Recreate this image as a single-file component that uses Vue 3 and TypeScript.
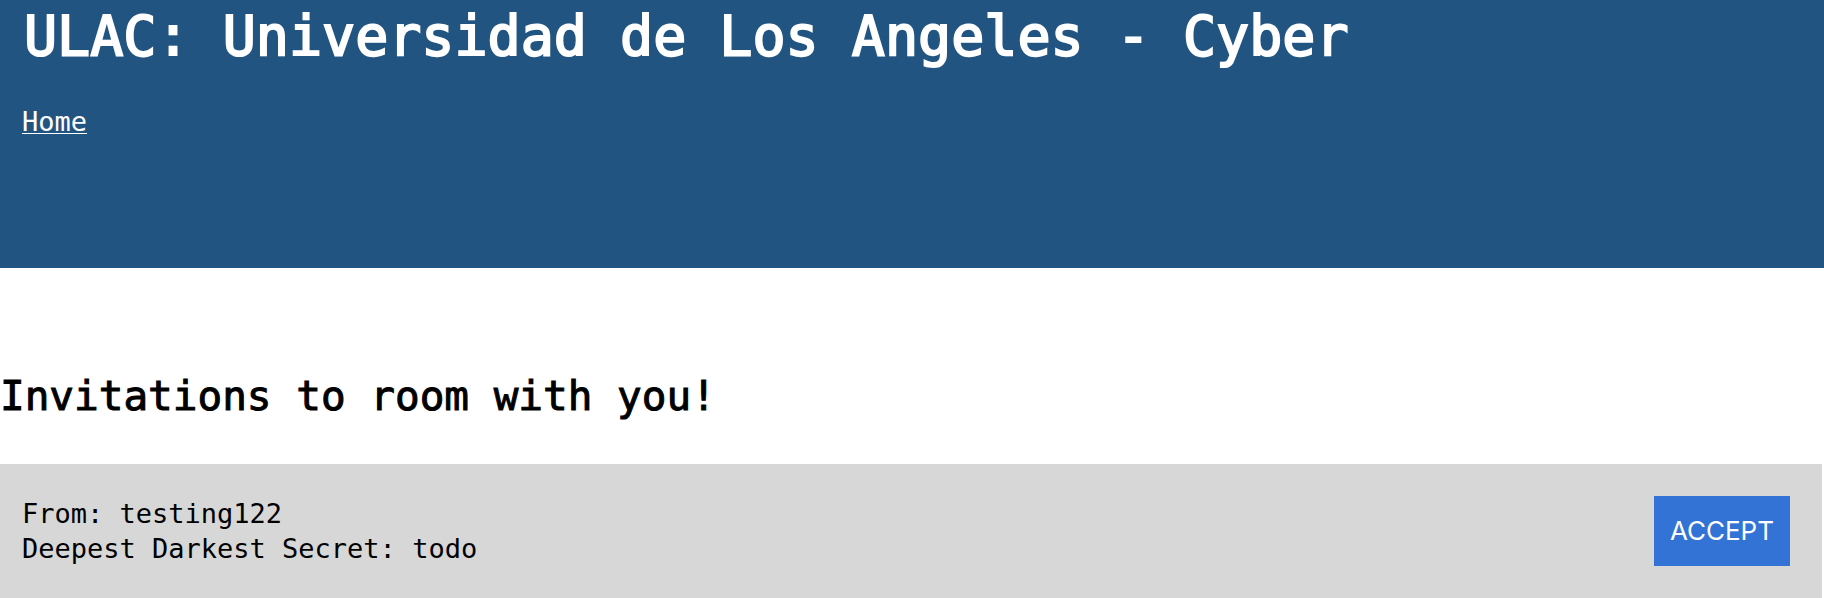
<script setup lang="ts">
interface Invitation {
  from: string
  secret: string
}

const invitations: Invitation[] = [{ from: 'testing122', secret: 'todo' }]
</script>

<template>
  <div class="page">
    <header class="banner">
      <h1>ULAC: Universidad de Los Angeles - Cyber</h1>
      <nav><a href="#">Home</a></nav>
    </header>
    <main>
      <h2>Invitations to room with you!</h2>
      <section v-for="invite in invitations" :key="invite.from" class="invite">
        <div class="details">
          <p>From: {{ invite.from }}</p>
          <p>Deepest Darkest Secret: {{ invite.secret }}</p>
        </div>
        <button type="button">ACCEPT</button>
      </section>
    </main>
  </div>
</template>

<style>
body {
  margin: 0;
  background: #ffffff;
}
</style>

<style scoped>
.page {
  font-family: "DejaVu Sans Mono", "Liberation Mono", monospace;
  font-size: 27px;
  line-height: 35px;
  color: #000000;
  overflow: hidden;
}

h1,
h2,
p {
  margin: 0;
  font-weight: 400;
}

.banner {
  padding: 0 22px 129px;
  background: #225482;
  color: #ffffff;
}

h1 {
  padding-left: 2px;
  font-size: 55px;
  line-height: 72px;
  -webkit-text-stroke: 2px currentColor;
}

nav {
  padding-top: 32px;
}

a {
  color: inherit;
  text-decoration: underline;
  text-decoration-thickness: 1px;
  text-underline-offset: 2px;
}

h2 {
  padding: 100px 0 40px;
  font-size: 41px;
  line-height: 56px;
  -webkit-text-stroke: 1px currentColor;
}

.invite {
  display: flex;
  align-items: center;
  justify-content: space-between;
  margin-right: 2px;
  padding: 32px 32px 32px 22px;
  background: #d7d7d7;
}

button {
  padding: 0 16px;
  height: 70px;
  border: 0;
  border-radius: 0;
  background: #3273d5;
  color: #ffffff;
  font: 400 26px/34px Inter, Roboto, sans-serif;
  cursor: pointer;
}
</style>
